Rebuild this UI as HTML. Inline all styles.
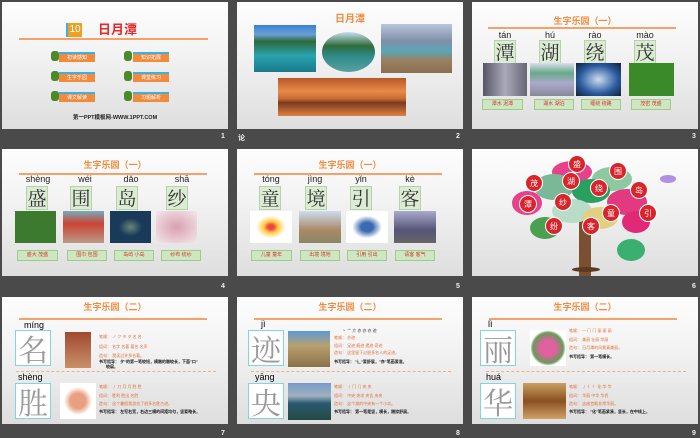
<!DOCTYPE html>
<html><head><meta charset="utf-8"><style>
*{margin:0;padding:0;box-sizing:border-box}
body{width:700px;height:438px;background:#4a4a4a;position:relative;overflow:hidden;font-family:"Liberation Sans","Noto Sans CJK SC",sans-serif}
.s{position:absolute;width:226px;height:127px;background:linear-gradient(#fdfdfd,#f3f3f3 40%,#dedede);overflow:hidden}
.s *{position:absolute}
.n{position:absolute;color:#eee;font-size:7px;font-weight:bold}
.t{left:0;width:100%;text-align:center;color:#f08a3c;font-weight:bold;font-size:9px}
.ln{height:2px;background:#f5a26a}
.py{font-size:9px;color:#222;text-align:center;width:40px}
.ch{width:22px;height:24px;background:#dcebd4;border:1px solid #b6d3a8;font-size:19px;line-height:22px;text-align:center;color:#333;font-family:"Noto Serif CJK SC",serif}
.lb{height:11px;background:#cfe6c2;border:1px solid #9ccc88;color:#d0362c;font-size:5px;line-height:9px;text-align:center}
.mi{width:36px;height:10px;background:#f08a3c;border-top:2px solid #3ab0e8;color:#fff;font-size:5px;line-height:8px;text-align:center}
.ic{width:8px;height:10px;background:#4a8a2a;border-radius:3px}
.bc{width:36px;height:36px;border:1px solid #7fd6dc;background:#fff;color:#999;font-size:30px;line-height:34px;text-align:center;font-family:"Noto Serif CJK SC",serif}
.tx{font-size:4px;color:#e0703a;white-space:nowrap}
.tb{font-size:4px;color:#111;font-weight:bold;white-space:nowrap}
.dl{height:0;border-top:1px dashed #f2b08a}
.ap{width:18px;height:18px;border-radius:50%;background:#d8242a;color:#fff;font-size:8px;line-height:18px;text-align:center;border:1px solid #fff}
.h{border-radius:50%}
</style></head><body>

<!-- slide 1 -->
<div class="s" style="left:2px;top:2px">
 <div style="left:64px;top:21px;width:16px;height:14px;background:#f0a020;color:#fff;font-size:10px;line-height:14px;text-align:center;border-left:2px solid #3ab0e8">10</div>
 <div style="left:96px;top:17px;color:#e8282a;font-size:13px;font-weight:bold">日月潭</div>
 <div class="ln" style="left:17px;top:36px;width:189px"></div>
 <div class="ic" style="left:49px;top:49px"></div><div class="mi" style="left:57px;top:50px">初读感知</div>
 <div class="ic" style="left:122px;top:49px"></div><div class="mi" style="left:131px;top:50px">知识拓展</div>
 <div class="ic" style="left:49px;top:69px"></div><div class="mi" style="left:57px;top:70px">生字乐园</div>
 <div class="ic" style="left:122px;top:69px"></div><div class="mi" style="left:131px;top:70px">课堂练习</div>
 <div class="ic" style="left:49px;top:89px"></div><div class="mi" style="left:57px;top:90px">课文解读</div>
 <div class="ic" style="left:122px;top:89px"></div><div class="mi" style="left:131px;top:90px">习题解析</div>
 <div style="left:0;width:100%;top:111px;text-align:center;font-size:5.5px;font-weight:bold;color:#222">第一PPT模板网-WWW.1PPT.COM</div>
</div>
<div class="n" style="left:221px;top:133px">1</div>

<!-- slide 2 -->
<div class="s" style="left:237px;top:2px">
 <div class="t" style="top:8px;font-size:10px">日月潭</div>
 <div style="left:17px;top:23px;width:62px;height:47px;background:linear-gradient(#3a7fd0 0,#6aa0d8 20%,#2d6a3a 35%,#2aa3b0 65%,#1a7a8a)"></div>
 <div style="left:85px;top:30px;width:53px;height:40px;border-radius:50%;background:linear-gradient(#c8dff0,#2f6b3a 35%,#2f8a8a 60%,#5aa0a0)"></div>
 <div style="left:144px;top:22px;width:71px;height:49px;background:linear-gradient(#b9c6dc,#7f8fa8 35%,#5aa6b8 55%,#9a8060 75%,#8a7050)"></div>
 <div style="left:41px;top:76px;width:128px;height:38px;background:linear-gradient(#b8582a,#e88a48 35%,#c66a30 55%,#7a3a20 65%,#e08040)"></div>
</div>
<div class="n" style="left:238px;top:133px">论</div><div class="n" style="left:456px;top:133px">2</div>

<!-- slide 3 -->
<div class="s" style="left:472px;top:2px">
 <div class="t" style="top:12px">生字乐园（一）</div>
 <div class="ln" style="left:16px;top:25px;width:188px"></div>
 <div class="py" style="left:13px;top:28px">tán</div><div class="py" style="left:58px;top:28px">hú</div><div class="py" style="left:103px;top:28px">rào</div><div class="py" style="left:153px;top:28px">mào</div>
 <div class="ch" style="left:22px;top:38px">潭</div><div class="ch" style="left:67px;top:38px">湖</div><div class="ch" style="left:112px;top:38px">绕</div><div class="ch" style="left:162px;top:38px">茂</div>
 <div style="left:11px;top:61px;width:44px;height:33px;background:linear-gradient(90deg,#556,#aab,#667)"></div>
 <div style="left:58px;top:61px;width:44px;height:33px;background:linear-gradient(#dde,#6a8 30%,#aac 60%,#889)"></div>
 <div style="left:104px;top:61px;width:45px;height:33px;background:radial-gradient(#cde,#2a5aa0 60%,#123)"></div>
 <div style="left:157px;top:61px;width:45px;height:33px;background:#3a8a2a"></div>
 <div class="lb" style="left:10px;top:97px;width:41px">潭水 泥潭</div><div class="lb" style="left:62px;top:97px;width:40px">湖水 湖泊</div><div class="lb" style="left:109px;top:97px;width:40px">缠绕 绕路</div><div class="lb" style="left:159px;top:97px;width:40px">茂密 茂盛</div>
</div>
<div class="n" style="left:692px;top:133px">3</div>

<!-- slide 4 -->
<div class="s" style="left:2px;top:149px">
 <div class="t" style="top:9px">生字乐园（一）</div>
 <div class="ln" style="left:17px;top:24px;width:188px"></div>
 <div class="py" style="left:16px;top:25px">shèng</div><div class="py" style="left:63px;top:25px">wéi</div><div class="py" style="left:109px;top:25px">dǎo</div><div class="py" style="left:160px;top:25px">shā</div>
 <div class="ch" style="left:24px;top:37px">盛</div><div class="ch" style="left:68px;top:37px">围</div><div class="ch" style="left:114px;top:37px">岛</div><div class="ch" style="left:164px;top:37px">纱</div>
 <div style="left:13px;top:62px;width:41px;height:32px;background:#3c7a30"></div>
 <div style="left:61px;top:62px;width:41px;height:32px;background:linear-gradient(#7ab,#c43 40%,#b98)"></div>
 <div style="left:108px;top:62px;width:41px;height:32px;background:radial-gradient(#687,#1a3a5a 40%)"></div>
 <div style="left:154px;top:62px;width:41px;height:32px;background:radial-gradient(#d8a0b0,#f4e8ea)"></div>
 <div class="lb" style="left:15px;top:101px;width:41px">盛大 茂盛</div><div class="lb" style="left:65px;top:101px;width:40px">围巾 包围</div><div class="lb" style="left:112px;top:101px;width:40px">岛屿 小岛</div><div class="lb" style="left:159px;top:101px;width:40px">纱布 纺纱</div>
</div>
<div class="n" style="left:221px;top:283px">4</div>

<!-- slide 5 -->
<div class="s" style="left:237px;top:149px">
 <div class="t" style="top:9px">生字乐园（一）</div>
 <div class="ln" style="left:17px;top:24px;width:188px"></div>
 <div class="py" style="left:14px;top:25px">tóng</div><div class="py" style="left:58px;top:25px">jìng</div><div class="py" style="left:104px;top:25px">yǐn</div><div class="py" style="left:153px;top:25px">kè</div>
 <div class="ch" style="left:22px;top:37px">童</div><div class="ch" style="left:68px;top:37px">境</div><div class="ch" style="left:113px;top:37px">引</div><div class="ch" style="left:162px;top:37px">客</div>
 <div style="left:13px;top:62px;width:42px;height:32px;background:radial-gradient(#e44 10%,#fc4 25%,#fff 50%)"></div>
 <div style="left:62px;top:62px;width:42px;height:32px;background:linear-gradient(#cde,#a86 60%,#886)"></div>
 <div style="left:109px;top:62px;width:42px;height:32px;background:radial-gradient(#3a6ab0 20%,#fff 50%)"></div>
 <div style="left:157px;top:62px;width:42px;height:32px;background:linear-gradient(#aac,#557 60%,#666)"></div>
 <div class="lb" style="left:14px;top:101px;width:41px">儿童 童年</div><div class="lb" style="left:63px;top:101px;width:40px">出境 境地</div><div class="lb" style="left:110px;top:101px;width:40px">引用 引出</div><div class="lb" style="left:158px;top:101px;width:40px">请客 客气</div>
</div>
<div class="n" style="left:456px;top:283px">5</div>

<!-- slide 6 -->
<div class="s" style="left:472px;top:149px">
 <div style="left:107px;top:68px;width:12px;height:60px;background:#7a5030;border-radius:2px"></div>
 <div style="left:100px;top:118px;width:28px;height:5px;background:#5a3a20;border-radius:50%"></div>
 <div class="h" style="left:80px;top:12px;width:40px;height:22px;background:#e6428a"></div>
 <div class="h" style="left:120px;top:18px;width:40px;height:24px;background:#8cc8a0"></div>
 <div class="h" style="left:62px;top:25px;width:40px;height:26px;background:#7ab898"></div>
 <div class="h" style="left:100px;top:30px;width:38px;height:24px;background:#2aa060"></div>
 <div class="h" style="left:135px;top:40px;width:40px;height:26px;background:#e23a80"></div>
 <div class="h" style="left:40px;top:42px;width:30px;height:24px;background:#e8408a"></div>
 <div class="h" style="left:80px;top:50px;width:40px;height:24px;background:#b8dcc8"></div>
 <div class="h" style="left:110px;top:58px;width:36px;height:22px;background:#e0d080"></div>
 <div class="h" style="left:150px;top:62px;width:28px;height:22px;background:#e02a78"></div>
 <div class="h" style="left:145px;top:90px;width:28px;height:22px;background:#3ab070"></div>
 <div class="h" style="left:58px;top:68px;width:30px;height:22px;background:#48a050"></div>
 <div class="ap" style="left:96px;top:6px">盛</div><div class="ap" style="left:137px;top:13px">围</div>
 <div class="ap" style="left:90px;top:23px">湖</div><div class="ap" style="left:53px;top:25px">茂</div>
 <div class="ap" style="left:118px;top:30px">绕</div><div class="ap" style="left:158px;top:32px">岛</div>
 <div class="ap" style="left:47px;top:46px">潭</div><div class="ap" style="left:82px;top:44px">纱</div>
 <div class="ap" style="left:130px;top:55px">童</div><div class="ap" style="left:167px;top:55px">引</div>
 <div class="ap" style="left:73px;top:68px">纷</div><div class="ap" style="left:110px;top:68px">客</div>
 <div style="left:188px;top:26px;width:16px;height:8px;background:#b090e0;border-radius:50%"></div>
</div>
<div class="n" style="left:692px;top:283px">6</div>

<!-- slide 7 -->
<div class="s" style="left:2px;top:297px">
 <div class="t" style="top:3px">生字乐园（二）</div>
 <div class="ln" style="left:17px;top:21px;width:188px"></div>
 <div style="left:22px;top:23px;font-size:9px">míng</div>
 <div class="bc" style="left:13px;top:33px">名</div>
 <div style="left:63px;top:35px;width:26px;height:36px;background:linear-gradient(#a04a30,#c89068)"></div>
 <div class="tx" style="left:97px;top:37px">笔顺： ノ ク タ タ 名 名</div>
 <div class="tx" style="left:97px;top:47px">组词： 名字 名著 著名 名声</div>
 <div class="tx" style="left:97px;top:56px">造句： 我读过许多名著。</div>
 <div class="tb" style="left:97px;top:62px">书写指导： 夕"的第一笔较短，横撇的撇较长，下面"口"</div>
 <div class="tb" style="left:104px;top:67px">较扁。</div>
 <div class="dl" style="left:14px;top:74px;width:200px"></div>
 <div style="left:16px;top:75px;font-size:9px">shèng</div>
 <div class="bc" style="left:13px;top:86px">胜</div>
 <div style="left:58px;top:86px;width:36px;height:36px;background:radial-gradient(#e8a080 30%,#fff 55%)"></div>
 <div class="tx" style="left:97px;top:87px">笔顺： 丿 刀 月 月 胜 胜</div>
 <div class="tx" style="left:97px;top:96px">组词： 胜利 胜出 名胜</div>
 <div class="tx" style="left:97px;top:104px">造句： 这个暑假我游览了很多名胜古迹。</div>
 <div class="tb" style="left:97px;top:112px">书写指导： 左窄右宽，右边三横的间距均匀，竖要略长。</div>
</div>
<div class="n" style="left:221px;top:430px">7</div>

<!-- slide 8 -->
<div class="s" style="left:237px;top:297px">
 <div class="t" style="top:3px">生字乐园（二）</div>
 <div class="ln" style="left:17px;top:21px;width:188px"></div>
 <div style="left:24px;top:22px;font-size:9px">jì</div>
 <div class="bc" style="left:11px;top:33px">迹</div>
 <div style="left:51px;top:34px;width:42px;height:36px;background:linear-gradient(#5a9ad8,#b8a070 40%,#8a7048)"></div>
 <div class="tx" style="left:105px;top:31px;color:#333">丶 亠 亣 亦 亦 亦 迹</div>
 <div class="tx" style="left:97px;top:38px">笔顺： 亦迹</div>
 <div class="tx" style="left:97px;top:46px">组词： 足迹 痕迹 遗迹 奇迹</div>
 <div class="tx" style="left:97px;top:53px">造句： 这里留下过很多名人的足迹。</div>
 <div class="tb" style="left:97px;top:62px">书写指导： "辶"要舒展，"亦"笔画要准。</div>
 <div class="dl" style="left:14px;top:74px;width:200px"></div>
 <div style="left:18px;top:75px;font-size:9px">yāng</div>
 <div class="bc" style="left:11px;top:86px">央</div>
 <div style="left:51px;top:86px;width:43px;height:37px;background:linear-gradient(#7a9ac8,#a0b0c0 35%,#2a5a70 55%,#244a40)"></div>
 <div class="tx" style="left:97px;top:87px">笔顺： 丨 冂 ⺆ 央 央</div>
 <div class="tx" style="left:97px;top:96px">组词： 中央 央求 央告 央央</div>
 <div class="tx" style="left:97px;top:104px">造句： 这个湖的中央有一个小岛。</div>
 <div class="tb" style="left:97px;top:112px">书写指导： 第一笔是竖，横长，撇捺舒展。</div>
</div>
<div class="n" style="left:456px;top:430px">8</div>

<!-- slide 9 -->
<div class="s" style="left:472px;top:297px">
 <div class="t" style="top:3px">生字乐园（二）</div>
 <div class="ln" style="left:17px;top:21px;width:188px"></div>
 <div style="left:16px;top:22px;font-size:9px">lì</div>
 <div class="bc" style="left:8px;top:33px">丽</div>
 <div style="left:58px;top:33px;width:36px;height:36px;background:radial-gradient(#e060a0 30%,#6a9a5a 60%,#fff 70%)"></div>
 <div class="tx" style="left:97px;top:31px">笔顺： 一 冂 冂 丽 丽 丽</div>
 <div class="tx" style="left:97px;top:40px">组词： 美丽 壮丽 华丽</div>
 <div class="tx" style="left:97px;top:48px">造句： 日月潭的风景真美丽。</div>
 <div class="tb" style="left:97px;top:57px">书写指导： 第一笔横长。</div>
 <div class="dl" style="left:14px;top:74px;width:200px"></div>
 <div style="left:14px;top:75px;font-size:9px">huá</div>
 <div class="bc" style="left:8px;top:86px">华</div>
 <div style="left:51px;top:86px;width:43px;height:36px;background:linear-gradient(#c8a060,#8a5020 50%,#d0a068)"></div>
 <div class="tx" style="left:97px;top:87px">笔顺： 丿 亻 亻 化 华 华</div>
 <div class="tx" style="left:97px;top:96px">组词： 华丽 中华 华侨</div>
 <div class="tx" style="left:97px;top:104px">造句： 这座宫殿非常华丽。</div>
 <div class="tb" style="left:97px;top:112px">书写指导： "化"笔画紧凑，竖长，在中线上。</div>
</div>
<div class="n" style="left:692px;top:430px">9</div>
</body></html>
